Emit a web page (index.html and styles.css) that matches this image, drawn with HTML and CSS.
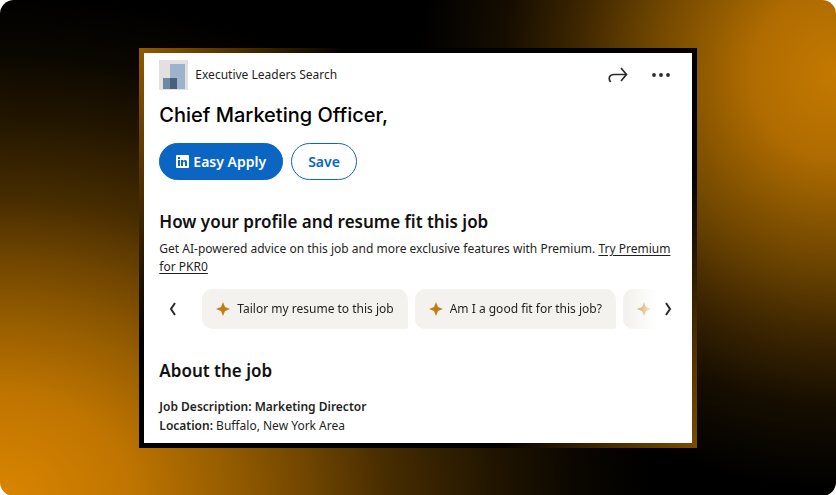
FILE: index.html
```html
<!DOCTYPE html>
<html lang="en">
<head>
    <meta charset="UTF-8">
    <meta name="viewport" content="width=device-width, initial-scale=1.0">
    <title>Chief Marketing Officer</title>
    <link rel="stylesheet" href="styles.css">
</head>
<body>
    <div class="backdrop">
        <div class="frame">
            <main class="card">
                <header class="company">
                    <svg class="company-logo" viewBox="0 0 29 30" aria-hidden="true">
                        <rect width="29" height="30" fill="#e2e1df"/>
                        <rect x="11" y="4" width="15" height="25" fill="#9db3cb"/>
                        <rect x="4" y="18" width="7" height="11" fill="#7088a8"/>
                        <rect x="11" y="18" width="7" height="11" fill="#4a5f7e"/>
                    </svg>
                    <span class="company-name">Executive Leaders Search</span>
                    <button class="icon-button" type="button" aria-label="Share">
                        <svg width="20" height="16" viewBox="0 0 20 16" fill="none" stroke="#2b2b2b" stroke-width="1.700">
                            <path d="M2.500 15C0 11 1.500 7.500 6 7.500H18M13 1L18.500 7.500L13 14"/>
                        </svg>
                    </button>
                    <button class="icon-button" type="button" aria-label="More options">
                        <svg width="20" height="16" viewBox="0 0 20 16" fill="#2b2b2b">
                            <circle cx="3" cy="8" r="1.900"/>
                            <circle cx="10" cy="8" r="1.900"/>
                            <circle cx="17" cy="8" r="1.900"/>
                        </svg>
                    </button>
                </header>

                <h1>Chief Marketing Officer,</h1>

                <div class="actions">
                    <button class="button button-primary" type="button">
                        <svg width="13" height="13" viewBox="0 0 13 13" aria-hidden="true">
                            <rect width="13" height="13" rx="1" fill="#fff"/>
                            <path d="M2 5H4V11H2ZM2 2H4V4H2ZM5 5H7V6Q8 5 9 5Q11 5 11 7V11H9V8Q9 6.500 8 6.500Q7 6.500 7 8V11H5Z" fill="#0a66c2"/>
                        </svg>
                        Easy Apply
                    </button>
                    <button class="button" type="button">Save</button>
                </div>

                <section class="fit">
                    <h2>How your profile and resume fit this job</h2>
                    <p>Get AI-powered advice on this job and more exclusive features with Premium. <a href="#">Try Premium for PKR0</a></p>
                </section>

                <div class="carousel">
                    <button class="arrow" type="button" aria-label="Previous">
                        <svg width="8" height="14" viewBox="0 0 8 14" fill="none" stroke="#2b2b2b" stroke-width="2">
                            <path d="M6 1L2 7L6 13"/>
                        </svg>
                    </button>
                    <div class="prompts">
                        <button class="prompt" type="button">
                            <svg class="spark" viewBox="0 0 14 14" aria-hidden="true"><path d="M7 0L9 5L14 7L9 9L7 14L5 9L0 7L5 5Z"/></svg>
                            Tailor my resume to this job
                        </button>
                        <button class="prompt" type="button">
                            <svg class="spark" viewBox="0 0 14 14" aria-hidden="true"><path d="M7 0L9 5L14 7L9 9L7 14L5 9L0 7L5 5Z"/></svg>
                            Am I a good fit for this job?
                        </button>
                        <button class="prompt" type="button" aria-label="Next prompt">
                            <svg class="spark" viewBox="0 0 14 14" aria-hidden="true"><path d="M7 0L9 5L14 7L9 9L7 14L5 9L0 7L5 5Z"/></svg>
                        </button>
                    </div>
                    <button class="arrow arrow-next" type="button" aria-label="Next">
                        <svg width="8" height="14" viewBox="0 0 8 14" fill="none" stroke="#2b2b2b" stroke-width="2">
                            <path d="M2 1L6 7L2 13"/>
                        </svg>
                    </button>
                </div>

                <section class="about">
                    <h2>About the job</h2>
                    <p><strong>Job Description: Marketing Director</strong></p>
                    <p><strong>Location:</strong> Buffalo, New York Area</p>
                </section>
            </main>
        </div>
    </div>
</body>
</html>
```

FILE: styles.css
```css
* {
    box-sizing: border-box;
}
body {
    margin: 0;
    background-color: #fff;
    font-family: "Noto Sans", "Open Sans", sans-serif;
    font-size: 12px;
    line-height: 18px;
    color: #1f1f1f;
}
h1, h2, p {
    margin: 0;
}
button {
    padding: 0;
    border: 0;
    background: none;
    font: inherit;
    color: inherit;
}
.backdrop {
    min-height: 100vh;
    padding: 48px calc(100% / 6);
    border-radius: 14px;
    background-color: #000;
    background-image:
        radial-gradient(78% 101% at 0% 100%, #d98500 0%, #c07500 20%, #965d00 35%, #714600 47%, #452b00 60%, #231600 75%, #0b0700 88%, #000 100%),
        radial-gradient(50% 84% at 100% 15%, #c47900 0%, #b06c00 20%, #885500 35%, #6c4400 46%, #3c2500 63%, #150d00 80%, #000 100%);
    background-blend-mode: screen;
}
.frame {
    padding: 5px;
    background: linear-gradient(125deg, #945a00 0%, #000 25%, #000 76%, #7c4c00 100%);
}
.card {
    padding: 7px 15px 8px;
    background-color: #fff;
}
.company {
    display: flex;
    align-items: center;
    gap: 7px;
    padding-right: 6px;
}
.company-logo {
    width: 29px;
    height: 30px;
}
.company-name {
    flex: 1;
}
.icon-button {
    display: flex;
    margin-left: 16px;
}
h1 {
    margin-top: 12px;
    font-family: Inter, Lato, sans-serif;
    font-size: 20px;
    font-weight: 500;
    line-height: 26px;
    color: #000;
}
.actions {
    display: flex;
    gap: 8px;
    margin-top: 15px;
}
.button {
    display: flex;
    align-items: center;
    gap: 4px;
    height: 37px;
    padding: 0 16px;
    border: 1px solid #0a66c2;
    border-radius: 19px;
    font-size: 14px;
    font-weight: 600;
    color: #0a66c2;
}
.button-primary {
    background-color: #0a66c2;
    color: #fff;
}
h2 {
    font-size: 17px;
    font-weight: 600;
    line-height: 24px;
    color: #111;
}
.fit {
    margin-top: 30px;
}
.fit p {
    margin-top: 6px;
}
a {
    color: inherit;
    text-underline-offset: 2px;
}
.carousel {
    display: flex;
    align-items: center;
    margin-top: 13px;
}
.arrow {
    display: flex;
    padding: 0 10px;
}
.arrow-next {
    padding: 0 5px;
}
/* the last prompt fades out under the next arrow */
.prompts {
    display: flex;
    flex: 1;
    gap: 7px;
    margin-left: 15px;
    overflow: hidden;
    mask-image: linear-gradient(to left, transparent 3px, #000 32px);
}
.prompt {
    display: flex;
    flex-shrink: 0;
    align-items: center;
    gap: 7px;
    height: 40px;
    padding: 0 14px;
    border-radius: 10px 10px 2px 10px;
    background-color: #f3f2ee;
}
.spark {
    width: 14px;
    height: 14px;
    fill: #c37d16;
}
.about {
    margin-top: 30px;
}
.about h2 {
    margin-bottom: 14px;
}
.about p {
    line-height: 19px;
}
strong {
    font-weight: 600;
}
```
